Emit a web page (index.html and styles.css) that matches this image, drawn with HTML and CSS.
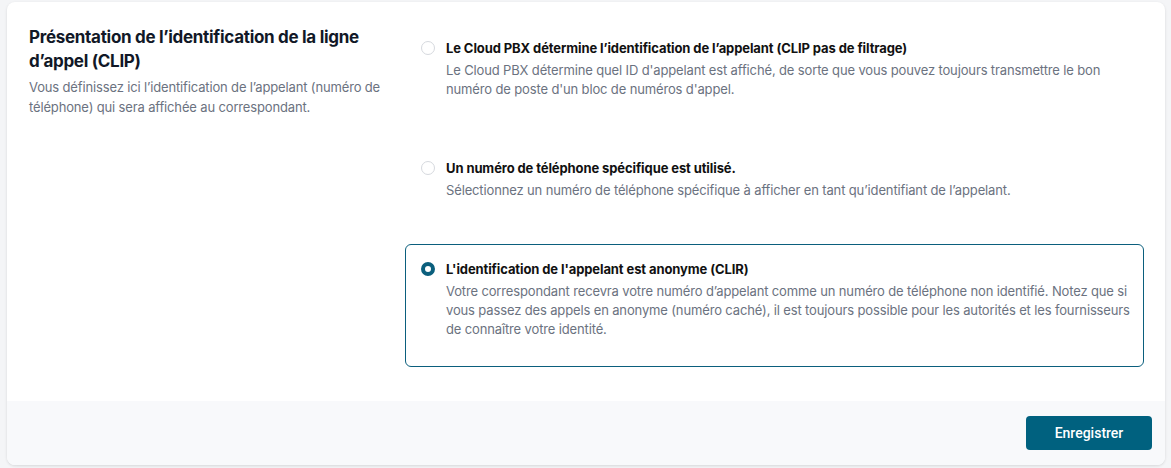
FILE: index.html
```html
<!DOCTYPE html>
<html lang="fr">
<head>
<meta charset="utf-8">
<link rel="stylesheet" href="styles.css">
</head>
<body>
<div class="card">
  <div class="card-body">
    <div class="intro">
      <h2 class="intro-title">Présentation de l’identification de la ligne d’appel (CLIP)</h2>
      <p class="intro-text">Vous définissez ici l’identification de l’appelant (numéro de téléphone) qui sera affichée au correspondant.</p>
    </div>
    <div class="options">
      <label class="option">
        <span class="radio"></span>
        <span class="option-content">
          <span class="option-title">Le Cloud PBX détermine l’identification de l’appelant (CLIP pas de filtrage)</span>
          <span class="option-text">Le Cloud PBX détermine quel ID d'appelant est affiché, de sorte que vous pouvez toujours transmettre le bon numéro de poste d'un bloc de numéros d'appel.</span>
        </span>
      </label>
      <label class="option">
        <span class="radio"></span>
        <span class="option-content">
          <span class="option-title">Un numéro de téléphone spécifique est utilisé.</span>
          <span class="option-text">Sélectionnez un numéro de téléphone spécifique à afficher en tant qu’identifiant de l’appelant.</span>
        </span>
      </label>
      <label class="option selected">
        <span class="radio"></span>
        <span class="option-content">
          <span class="option-title">L'identification de l'appelant est anonyme (CLIR)</span>
          <span class="option-text">Votre correspondant recevra votre numéro d’appelant comme un numéro de téléphone non identifié. Notez que si vous passez des appels en anonyme (numéro caché), il est toujours possible pour les autorités et les fournisseurs de connaître votre identité.</span>
        </span>
      </label>
    </div>
  </div>
  <div class="card-footer">
    <button class="btn-save" type="button">Enregistrer</button>
  </div>
</div>
</body>
</html>
```

FILE: styles.css
```css
* { box-sizing: border-box; }
html, body { margin: 0; }
body {
  background: #f4f5f7;
  padding: 2px 6px 3px 7px;
  font-family: Inter, "Noto Sans", sans-serif;
  color: #111827;
}
.card {
  background: #fff;
  border-radius: 8px;
  box-shadow: 0 1px 3px rgba(0,0,0,0.12);
  overflow: hidden;
}
.card-body {
  display: flex;
  padding: 21px 21px 35px 22px;
  height: 399px;
}
.intro {
  width: 360px;
  flex: none;
  padding-top: 2px;
}
.intro-title {
  margin: 0;
  font-size: 17px;
  line-height: 24px;
  font-weight: 700;
  letter-spacing: -0.3px;
  color: #111827;
}
.intro-text {
  margin: 4px 0 0;
  font-size: 13px;
  line-height: 20px;
  letter-spacing: -0.15px;
  color: #6b7280;
}
.options {
  margin-left: 16px;
  flex: 1;
  display: flex;
  flex-direction: column;
  gap: 16px;
}
.option {
  display: flex;
  align-items: flex-start;
  border: 1px solid transparent;
  border-radius: 6px;
  padding: 14px 6px 27px 15px;
}
.option.selected {
  border-color: #0b5f7d;
}
.radio {
  flex: none;
  width: 14px;
  height: 14px;
  border-radius: 50%;
  border: 1px solid #d6d9de;
  margin-top: 3px;
  margin-right: 11px;
  background: #fff;
}
.selected .radio {
  border: 4px solid #0b5f7d;
}
.option-content {
  display: flex;
  flex-direction: column;
  gap: 3px;
}
.option-title {
  font-size: 13px;
  line-height: 20px;
  font-weight: 700;
  letter-spacing: -0.1px;
  color: #111;
}
.option-text {
  font-size: 13px;
  line-height: 19px;
  letter-spacing: -0.14px;
  color: #6b7280;
}
.card-footer {
  background: #f8f9fb;
  height: 64px;
  display: flex;
  justify-content: flex-end;
  align-items: center;
  padding: 0 13px;
}
.btn-save {
  width: 126px;
  height: 34px;
  border: none;
  border-radius: 4px;
  background: #00617f;
  color: #fff;
  font-family: Roboto, sans-serif;
  font-size: 14px;
  font-weight: 500;
}
```
